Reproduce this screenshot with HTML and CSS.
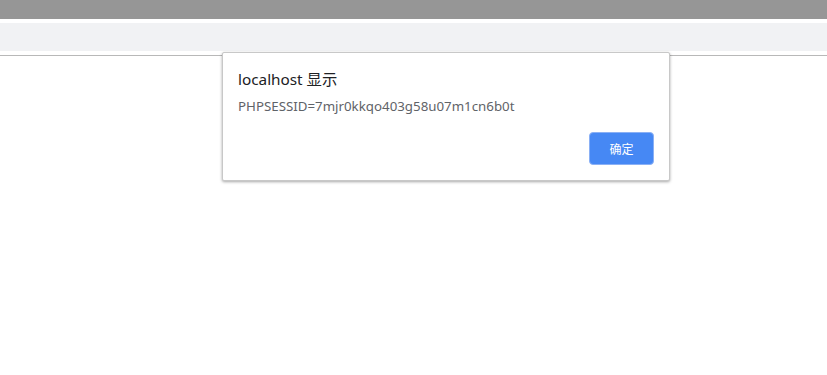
FILE: index.html
```html
<!DOCTYPE html>
<html lang="zh-CN">
<head>
<meta charset="utf-8">
<title>localhost</title>
<link rel="stylesheet" href="styles.css">
</head>
<body>
<div class="chrome">
  <div class="titlebar"></div>
  <div class="toolbar"></div>
</div>
<div class="page"></div>
<div class="dialog" role="alertdialog">
  <div class="dialog-title">localhost 显示</div>
  <div class="dialog-message">PHPSESSID=7mjr0kkqo403g58u07m1cn6b0t</div>
  <div class="dialog-actions">
    <button class="btn-ok">确定</button>
  </div>
</div>
</body>
</html>
```
FILE: styles.css
```css
html, body {
  margin: 0;
  padding: 0;
  background: #ffffff;
  font-family: "Noto Sans", "Open Sans", "Noto Sans CJK SC", sans-serif;
}
.chrome {
  display: flex;
  flex-direction: column;
  border-bottom: 1px solid #b8b8b8;
}
.titlebar {
  height: 19px;
  background: #969696;
  margin-bottom: 4px;
}
.toolbar {
  height: 28px;
  background: #f1f2f4;
  margin-bottom: 4px;
}
.page {
  height: 300px;
}
.dialog {
  position: absolute;
  left: 222px;
  top: 52px;
  width: 448px;
  height: 129px;
  box-sizing: border-box;
  background: #ffffff;
  border: 1px solid #c8c8c8;
  border-radius: 2px;
  box-shadow: 0 1px 3px rgba(0,0,0,0.35);
  padding: 16px 15px 15px 15px;
  display: flex;
  flex-direction: column;
}
.dialog-title {
  font-size: 15.3px;
  color: #202124;
  line-height: 20px;
}
.dialog-message {
  margin-top: 8px;
  font-size: 13.3px;
  color: #5f6368;
  line-height: 18px;
}
.dialog-actions {
  margin-top: auto;
  display: flex;
  justify-content: flex-end;
}
.btn-ok {
  width: 65px;
  height: 33px;
  background: #4688f4;
  border: 1px solid #8ab0f5;
  border-radius: 4px;
  color: #ffffff;
  font-family: "Noto Sans CJK SC", sans-serif;
  font-size: 12px;
  padding: 0;
}
```
